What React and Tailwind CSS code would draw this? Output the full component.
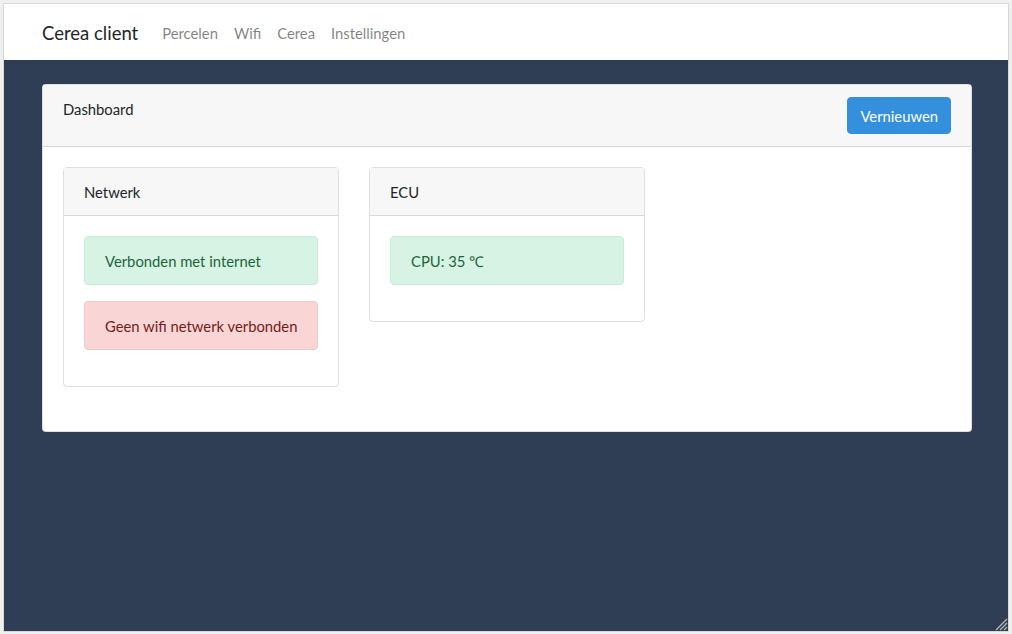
import React from "react";

export default function App() {
  const font = { fontFamily: "Lato, 'Open Sans', sans-serif" };
  return (
    <div className="w-[1012px] h-[634px] bg-[#f0f0f0] pt-[3px] pl-[3px] pr-[3px] pb-[2px]" style={font}>
      <div className="relative flex h-full flex-col border border-[#d9d9d9] bg-[#2f3e55] text-[14.8px] leading-[23px] text-[#212529] whitespace-nowrap">
        <nav className="flex h-[56px] shrink-0 items-center bg-white pl-[38px] pt-[2px] shadow-[0_2px_4px_rgba(0,0,0,0.04)]">
          <span className="mr-[16px] text-[18.5px] text-[#212529]">Cerea client</span>
          <div className="flex">
            {["Percelen", "Wifi", "Cerea", "Instellingen"].map((l) => (
              <span key={l} className="px-[8px] text-black/50">{l}</span>
            ))}
          </div>
        </nav>
        <main className="pl-[38px] pt-[24px]">
          <div className="w-[930px] rounded-[4px] border border-black/[0.125] bg-white">
            <div className="flex items-start justify-between border-b border-black/[0.125] bg-[#f7f7f7] px-[20px] py-[12px]">
              <span className="pt-[1px]">Dashboard</span>
              <button className="h-[37px] rounded-[4px] border border-[#3490dc] bg-[#3490dc] px-[12px] pt-[1px] text-white">Vernieuwen</button>
            </div>
            <div className="flex gap-[30px] p-[20px]">
              <div className="mb-[24px] w-[276px] self-start rounded-[4px] border border-black/[0.125]">
                <div className="border-b border-black/[0.125] bg-[#f7f7f7] px-[20px] pt-[13px] pb-[11px]">Netwerk</div>
                <div className="flex flex-col gap-[16px] p-[20px] pb-[36px]">
                  <div className="rounded-[4px] border border-[#c7eed8] bg-[#d7f3e3] px-[20px] pt-[13px] pb-[11px] text-[#1d643b]">Verbonden met internet</div>
                  <div className="rounded-[4px] border border-[#f7c6c5] bg-[#f9d6d5] px-[20px] pt-[13px] pb-[11px] text-[#761b18]">Geen wifi netwerk verbonden</div>
                </div>
              </div>
              <div className="w-[276px] self-start rounded-[4px] border border-black/[0.125]">
                <div className="border-b border-black/[0.125] bg-[#f7f7f7] px-[20px] pt-[13px] pb-[11px]">ECU</div>
                <div className="flex flex-col p-[20px] pb-[36px]">
                  <div className="rounded-[4px] border border-[#c7eed8] bg-[#d7f3e3] px-[20px] pt-[13px] pb-[11px] text-[#1d643b]">CPU: 35 ℃</div>
                </div>
              </div>
            </div>
          </div>
        </main>
        <svg className="absolute bottom-0 right-0" width="14" height="14" viewBox="0 0 14 14">
          <g stroke="#b8b8b8" strokeWidth="1.2">
            <line x1="13" y1="2" x2="2" y2="13" />
            <line x1="13" y1="6" x2="6" y2="13" />
            <line x1="13" y1="10" x2="10" y2="13" />
          </g>
        </svg>
      </div>
    </div>
  );
}
